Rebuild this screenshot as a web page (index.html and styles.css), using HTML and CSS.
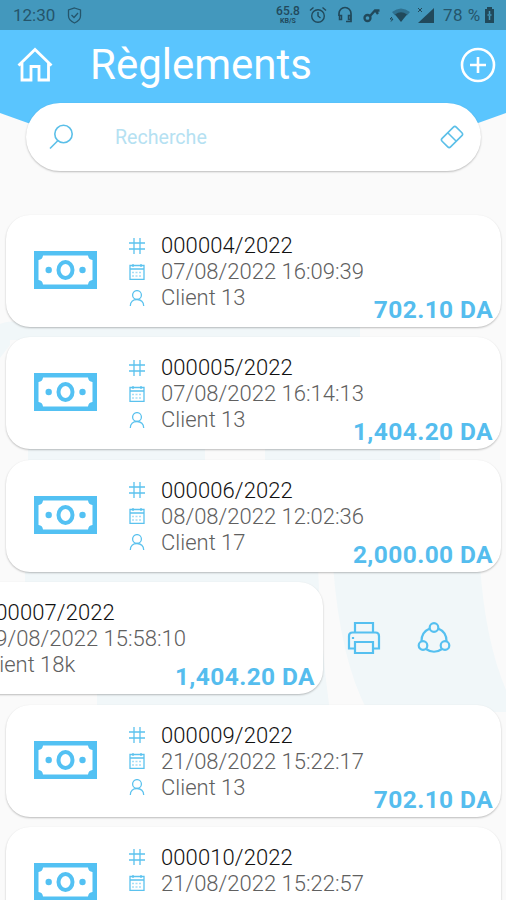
FILE: index.html
```
<!DOCTYPE html>
<html lang="fr">
<head>
  <meta charset="UTF-8">
  <meta name="viewport" content="width=device-width, initial-scale=1.0">
  <title>Règlements</title>
  <link rel="stylesheet" href="styles.css">
</head>
<body>
  <!-- Shared icons -->
  <svg class="sprite" aria-hidden="true">
    <symbol id="bill" viewBox="0 0 63 38">
      <path fill="currentColor" fill-rule="evenodd" d="M0 0H63V38H0Z M9 4.500A5 5 0 0 1 4.500 9V29A5 5 0 0 1 9 33.500H54A5 5 0 0 1 58.500 29V9A5 5 0 0 1 54 4.500Z"/>
      <ellipse cx="31.500" cy="19" rx="7" ry="8" fill="none" stroke="currentColor" stroke-width="4"/>
      <circle cx="14.700" cy="19" r="3.200" fill="currentColor"/>
      <circle cx="48.500" cy="19" r="3.200" fill="currentColor"/>
    </symbol>
    <symbol id="hash" viewBox="0 0 16 16">
      <path d="M5 0V16M11 0V16M0 5H16M0 11H16"/>
    </symbol>
    <symbol id="calendar" viewBox="0 0 16 16">
      <path d="M1 1.500H15V15.500H1ZM1 5H15M4 0V3M12 0V3"/>
      <path stroke-width="1.500" stroke-dasharray="2 1.500" opacity=".55" d="M3 8.500H13M3 12H13"/>
    </symbol>
    <symbol id="person" viewBox="0 0 16 16">
      <circle cx="8" cy="5" r="4.400"/>
      <path d="M1.300 16C1.300 12 4 9.500 8 9.500S14.700 12 14.700 16"/>
    </symbol>
  </svg>

  <div class="status-bar">
    <span class="clock">12:30</span>
    <svg class="shield" width="15" height="17" viewBox="0 0 15 17"><path d="M7.500 1L13.500 3V9C13.500 12 11 14.500 7.500 16C4 14.500 1.500 12 1.500 9V3Z"/><path d="M4.500 8L7 10.500L11 6"/></svg>
    <div class="status-right">
      <div class="speed"><b>65.8</b><span>KB/S</span></div>
      <svg class="alarm" width="18" height="18" viewBox="0 0 18 18"><circle cx="9" cy="10" r="6.300"/><path d="M9 6V10L11.500 12M1 4.500L4.500 1.500M17 4.500L13.500 1.500"/></svg>
      <svg class="headset" width="16" height="18" viewBox="0 0 16 18"><path stroke-width="1.700" d="M2 10V7.500A6 6 0 0 1 14 7.500V15.500H9"/><path stroke-width="1.500" d="M2.500 9.500H4.500V13.500H2.500ZM11.500 9.500H13.500V13.500H11.500Z"/></svg>
      <svg class="key" width="18" height="16" viewBox="0 0 18 16"><circle cx="4.500" cy="11" r="3" stroke-width="2.300"/><path stroke-width="2.400" d="M7 9L12 3.500H16.500M12.500 3.500L15 7"/></svg>
      <svg class="wifi" width="22" height="16" viewBox="0 0 22 16"><path class="faint" d="M3 5Q12 -2 21 5L18 8.500Q12 4 6 8.500Z"/><path class="solid" d="M6 7.500Q12 3 18 7.500L12 15Z"/><path d="M3 10L1 12H4L2 14.500"/></svg>
      <svg class="signal" width="18" height="18" viewBox="0 0 18 18"><path class="solid" d="M17 2V17H1Z"/><path d="M1 2L5 6M5 2L1 6"/></svg>
      <span class="percent">78 %</span>
      <svg class="battery" width="11" height="17" viewBox="0 0 11 17"><path class="solid" d="M3 0H8V2H10V16H1V2H3Z"/><path class="bolt" d="M5.500 4V7M3.500 8H7.500M5.500 9V13"/></svg>
    </div>
  </div>

  <header class="header">
    <svg class="home" width="36" height="35" viewBox="0 0 36 35"><path d="M1.500 18.500L18 2.500L34.500 18.500M5 16V33H14V19.500H22V33H31.500V16"/></svg>
    <h1>Règlements</h1>
    <svg class="add" width="36" height="36" viewBox="0 0 36 36"><circle cx="18" cy="18" r="16"/><path d="M18 10V26M10 18H26"/></svg>
  </header>

  <div class="search">
    <svg width="26" height="26" viewBox="0 0 26 26"><circle cx="15.500" cy="10" r="8.700"/><path d="M10 16.500L2 24.500"/></svg>
    <span>Recherche</span>
    <svg class="eraser" width="24" height="24" viewBox="0 0 24 24"><g transform="rotate(-45 12 12)"><rect x="2" y="6" width="20" height="12" rx="2"/><path d="M12 6V18"/></g></svg>
  </div>

  <main class="list">
    <article class="card">
      <svg class="bill"><use href="#bill"/></svg>
      <div class="info">
        <div class="number"><svg><use href="#hash"/></svg>000004/2022</div>
        <div><svg><use href="#calendar"/></svg>07/08/2022 16:09:39</div>
        <div><svg><use href="#person"/></svg>Client 13</div>
      </div>
      <div class="amount">702.10 DA</div>
    </article>

    <article class="card">
      <svg class="bill"><use href="#bill"/></svg>
      <div class="info">
        <div class="number"><svg><use href="#hash"/></svg>000005/2022</div>
        <div><svg><use href="#calendar"/></svg>07/08/2022 16:14:13</div>
        <div><svg><use href="#person"/></svg>Client 13</div>
      </div>
      <div class="amount">1,404.20 DA</div>
    </article>

    <article class="card">
      <svg class="bill"><use href="#bill"/></svg>
      <div class="info">
        <div class="number"><svg><use href="#hash"/></svg>000006/2022</div>
        <div><svg><use href="#calendar"/></svg>08/08/2022 12:02:36</div>
        <div><svg><use href="#person"/></svg>Client 17</div>
      </div>
      <div class="amount">2,000.00 DA</div>
    </article>

    <!-- Swiped row: actions are revealed on the right -->
    <div class="swiped">
      <article class="card">
        <svg class="bill"><use href="#bill"/></svg>
        <div class="info">
          <div class="number"><svg><use href="#hash"/></svg>000007/2022</div>
          <div><svg><use href="#calendar"/></svg>09/08/2022 15:58:10</div>
          <div class="client"><svg><use href="#person"/></svg>Client 18k</div>
        </div>
        <div class="amount">1,404.20 DA</div>
      </article>
      <div class="actions">
        <svg width="34" height="34" viewBox="0 0 34 34"><path d="M8 11V2H26V11M8 27.500H2V15Q2 11.500 5.500 11.500H28.500Q32 11.500 32 15V27.500H26M8 21H26V32H8ZM6 16V18"/></svg>
        <svg width="34" height="34" viewBox="0 0 34 34"><circle cx="17" cy="6.500" r="4.300"/><circle cx="6" cy="24.500" r="4.300"/><circle cx="28" cy="24.500" r="4.300"/><path d="M12.800 7.500Q4.500 11 4.500 20M21.200 7.500Q29.500 11 29.500 20M9 28Q17 33.500 25 28"/></svg>
      </div>
    </div>

    <article class="card">
      <svg class="bill"><use href="#bill"/></svg>
      <div class="info">
        <div class="number"><svg><use href="#hash"/></svg>000009/2022</div>
        <div><svg><use href="#calendar"/></svg>21/08/2022 15:22:17</div>
        <div><svg><use href="#person"/></svg>Client 13</div>
      </div>
      <div class="amount">702.10 DA</div>
    </article>

    <article class="card">
      <svg class="bill"><use href="#bill"/></svg>
      <div class="info">
        <div class="number"><svg><use href="#hash"/></svg>000010/2022</div>
        <div><svg><use href="#calendar"/></svg>21/08/2022 15:22:57</div>
        <div><svg><use href="#person"/></svg>Client 13</div>
      </div>
      <div class="amount">702.10 DA</div>
    </article>
  </main>

  <svg class="watermark" viewBox="0 0 506 900"><path d="M0 324Q12 318 30 326H360V340H0ZM0 340H10V345L0 358ZM28 445H205V465H28ZM265 445H440V465H265ZM25 565H318Q320 640 330 712H97V690H25ZM333 565H480Q485 640 506 690V712H368Q340 660 333 565Z"/></svg>
</body>
</html>
```
FILE: styles.css
```
body {
  margin: 0;
  height: 900px;
  overflow: hidden;
  position: relative;
  font-family: Roboto, sans-serif;
  background-color: #fafafa;
}

svg {
  display: block;
  flex-shrink: 0;
  fill: none;
  stroke: currentColor;
}

.sprite {
  position: absolute;
  width: 0;
  height: 0;
}

/* Status bar */
.status-bar {
  height: 30px;
  box-sizing: border-box;
  padding: 0 11px 0 13px;
  display: flex;
  align-items: center;
  background-color: #4398bd;
  color: #25556b;
  font-size: 17px;
}

.shield {
  margin-left: 12px;
  stroke-width: 1.3;
}

.status-right {
  margin-left: auto;
  display: flex;
  align-items: center;
  color: #21495b;
}

.speed {
  width: 24px;
  text-align: center;
  font-size: 12px;
  line-height: 11px;
}

.speed b {
  display: block;
  font-weight: 500;
}

.speed span {
  display: block;
  font-size: 7px;
  line-height: 8px;
  font-weight: 700;
}

.alarm {
  margin-left: 9px;
  stroke-width: 1.4;
}

.headset {
  margin-left: 10px;
}

.key {
  margin-left: 10px;
}

.wifi {
  margin-left: 8px;
}

.signal {
  margin-left: 6px;
}

.solid {
  fill: currentColor;
  stroke: none;
}

.faint {
  fill: #2f7190;
  stroke: none;
}

.percent {
  margin-left: 8px;
  width: 38px;
  white-space: nowrap;
  letter-spacing: 0.5px;
  color: #25556b;
}

.battery {
  margin-left: 3px;
}

.bolt {
  stroke: #4398bd;
  stroke-width: 1.5;
}

/* Header */
.header {
  height: 73px;
  box-sizing: border-box;
  padding: 0 10px 4px 17px;
  display: flex;
  align-items: center;
  position: relative;
  color: #fff;
  background-color: #5ac5fe;
}

/* Pointed bottom edge that runs behind the search box */
.header::after {
  content: "";
  position: absolute;
  top: 72px;
  left: 0;
  width: 100%;
  height: 42px;
  background-color: #5ac5fe;
  clip-path: polygon(0 0, 100% 0, 100% 11px, 84% 40px, 16% 40px, 0 11px);
}

.header h1 {
  margin: 0 auto 0 37px;
  font-size: 42px;
  line-height: 52px;
  font-weight: 400;
}

.home {
  stroke-width: 2.8;
}

.add {
  stroke-width: 2.6;
}

/* Search */
.search {
  position: relative;
  z-index: 1;
  height: 68px;
  box-sizing: border-box;
  margin: 0 25px 0 26px;
  padding: 0 17px 0 22px;
  display: flex;
  align-items: center;
  border-radius: 34px;
  background-color: #fff;
  box-shadow: 0 1px 2px rgba(0, 0, 0, 0.25);
  color: #5bbfe8;
}

.search svg {
  stroke-width: 1.6;
}

.search span {
  margin-left: 41px;
  font-size: 19.6px;
  color: #b5e1f2;
}

.search .eraser {
  margin-left: auto;
}

/* Payments */
.list {
  position: relative;
  z-index: 1;
  margin-top: 44px;
  padding: 0 6px;
  display: flex;
  flex-direction: column;
  gap: 10.4px;
}

.card {
  width: 495px;
  height: 112px;
  flex-shrink: 0;
  box-sizing: border-box;
  padding: 18px 8px 0 28px;
  display: flex;
  border-radius: 24px;
  background-color: #fff;
  box-shadow: 0 1px 2px rgba(0, 0, 0, 0.25);
}

.bill {
  width: 63px;
  height: 38px;
  margin-top: 18px;
  color: #53c1f3;
  stroke: none;
}

.info {
  margin-left: 32px;
  font-size: 22px;
  line-height: 26px;
  font-weight: 300;
  color: #606060;
  white-space: nowrap;
}

.info > div {
  display: flex;
  align-items: center;
}

.info svg {
  width: 16px;
  height: 16px;
  margin: 0 16px 1px 0;
  color: #5bc2ee;
  stroke-width: 1.3;
}

.info .number {
  color: #111;
  letter-spacing: 0.1px;
}

.amount {
  align-self: flex-end;
  flex: 1;
  width: 0;
  display: flex;
  justify-content: flex-end;
  white-space: nowrap;
  font-size: 24.500px;
  line-height: 28px;
  font-weight: 700;
  letter-spacing: 0.4px;
  color: #55bdee;
  padding-bottom: 3px;
}

.swiped {
  display: flex;
  margin-left: -178px;
}

.swiped .client svg {
  margin-right: 13px;
}

.actions {
  margin-left: 24px;
  display: flex;
  align-items: center;
  gap: 36px;
  color: #55c0f0;
}

.actions svg {
  stroke-width: 2.2;
}

/* Pale shape behind the list */
.watermark {
  position: absolute;
  top: 0;
  left: 0;
  width: 506px;
  height: 900px;
  fill: #f1f7f9;
  stroke: none;
}
```
